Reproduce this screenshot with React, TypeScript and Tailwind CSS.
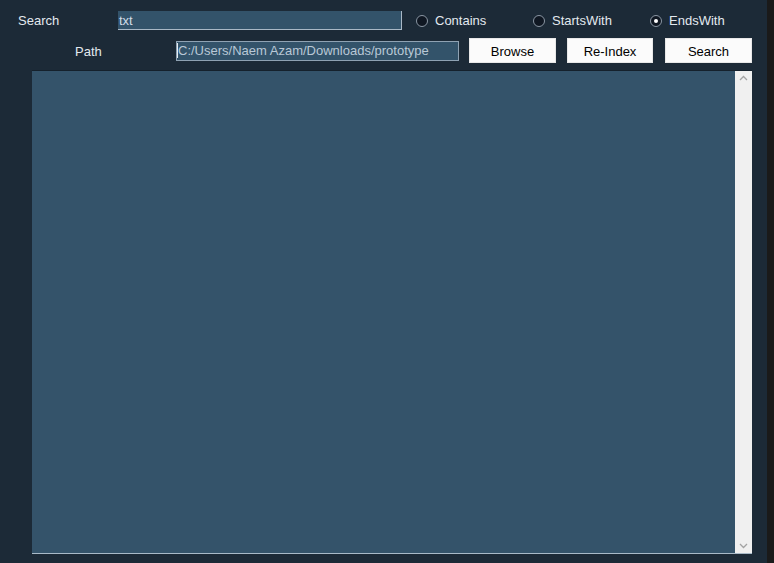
import React from 'react';

const font = "font-['Liberation_Sans',Arial,sans-serif]";

function Radio({ label, checked }: { label: string; checked?: boolean }) {
  return (
    <div className="flex items-center w-[117px] shrink-0">
      <span className="w-[12px] h-[12px] rounded-full border border-[#8a96a3] bg-[#0f1722] flex items-center justify-center">
        {checked && <span className="w-[4px] h-[4px] rounded-full bg-white" />}
      </span>
      <span className="ml-[7px] pt-[1px] text-[13px] text-[#e3e9ef]">{label}</span>
    </div>
  );
}

function Btn({ label, w, ml }: { label: string; w: string; ml: string }) {
  return (
    <button className={`${w} ${ml} h-[25px] pt-[2px] shrink-0 bg-[#fbfbfb] text-black text-[13px] border border-[#e8e8e8]`}>
      {label}
    </button>
  );
}

export default function App() {
  return (
    <div className={`w-[774px] h-[563px] flex bg-[#1a1a1a] overflow-hidden ${font}`}>
      <div className="w-[767px] h-full bg-[#1c2a37] pt-[11px]">
        {/* search row */}
        <div className="flex items-center h-[19px]">
          <span className="ml-[18px] w-[100px] pt-[1px] shrink-0 text-[13px] text-[#e3e9ef]">Search</span>
          <div className="w-[284px] h-[19px] shrink-0 bg-[#33536a] border-b border-r border-[#a9b8c6] border-t-[#26394a] border-l-[#26394a] flex items-center px-[1px] pt-[2px] text-[13px] text-[#cfdbe6]">
            txt
          </div>
          <div className="ml-[14px] flex">
            <Radio label="Contains" />
            <Radio label="StartsWith" />
            <Radio label="EndsWith" checked />
          </div>
        </div>

        {/* path row */}
        <div className="flex items-center h-[25px] mt-[8px]">
          <span className="ml-[75px] w-[101px] pt-[2px] shrink-0 text-[13px] text-[#e3e9ef]">Path</span>
          <div className="w-[283px] h-[20px] shrink-0 bg-[#33536a] border border-[#8fa2b3] flex items-center text-[13px] text-[#b9c8d6] overflow-hidden whitespace-nowrap">
            <span className="w-[1px] h-[15px] bg-[#e6edf3]" />
            <span className="pt-[1px]">C:/Users/Naem Azam/Downloads/prototype</span>
          </div>
          <Btn label="Browse" w="w-[87px]" ml="ml-[10px]" />
          <Btn label="Re-Index" w="w-[86px]" ml="ml-[11px]" />
          <Btn label="Search" w="w-[87px]" ml="ml-[12px]" />
        </div>

        {/* results area */}
        <div className="ml-[32px] mt-[7px] w-[720px] h-[484px] border-t border-[#15212c] border-b border-b-[#a9bac8] flex">
          <div className="flex-1 bg-[#34536a]" />
          <div className="w-[17px] bg-[#f0f0f0] flex flex-col items-center justify-between py-[4px]">
            <svg width="9" height="6" viewBox="0 0 9 6" fill="none">
              <path d="M1 5L4.5 1.5L8 5" stroke="#a3a3a3" strokeWidth="1.3" />
            </svg>
            <svg width="9" height="6" viewBox="0 0 9 6" fill="none">
              <path d="M1 1L4.5 4.5L8 1" stroke="#a3a3a3" strokeWidth="1.3" />
            </svg>
          </div>
        </div>
      </div>
    </div>
  );
}
